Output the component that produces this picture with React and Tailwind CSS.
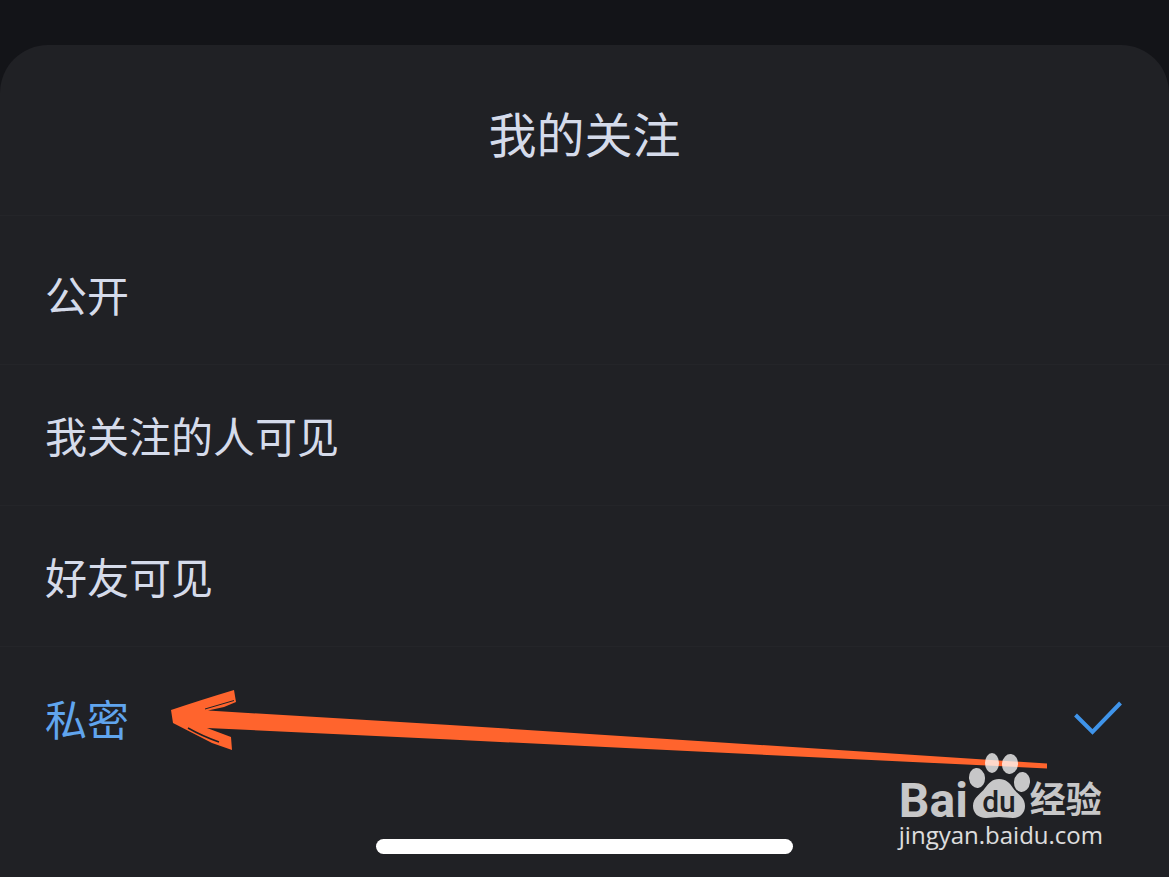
import React, { useState } from 'react';

const OPTIONS = [
  { value: 'public', label: '公开' },
  { value: 'following', label: '我关注的人可见' },
  { value: 'friends', label: '好友可见' },
  { value: 'private', label: '私密' },
];

/* ── Drawings ───────────────────────────────────────────────────────── */

const CheckIcon = () => (
  <svg width="48" height="34" viewBox="0 0 48 34" fill="none" stroke="#3f94ea" strokeWidth="4" aria-hidden="true">
    <path d="M1.500 14 18.500 31 46.500 2" />
  </svg>
);

/** Hand-drawn arrow pointing at the selected option */
const Arrow = () => (
  <svg width="878" height="80" viewBox="0 0 878 80" className="block" aria-hidden="true">
    <path
      fill="#ff642d"
      d="M1 21 Q34 10 64 1 L66 13 L54 18 L38 21.500 L280 36 L877 74.500 V79.500 L280 50.500 L37 39 L61 48 L62 61 L42 54 L3 34 Z"
    />
    <path d="M35 20 L64 11.500" stroke="#202125" strokeWidth="1" />
    <path d="M18 39 Q32 47 49 53" stroke="#202125" strokeWidth="1.500" fill="none" />
  </svg>
);

const Paw = () => (
  <svg width="62" height="69" viewBox="0 0 62 69" aria-hidden="true">
    <g fill="#fff" fillOpacity="0.75">
      <ellipse cx="9" cy="26" rx="8" ry="10" transform="rotate(-6 9 26)" />
      <ellipse cx="24" cy="11" rx="7" ry="10" />
      <ellipse cx="42" cy="12" rx="8" ry="10" transform="rotate(6 42 12)" />
      <ellipse cx="54" cy="30" rx="8" ry="10" transform="rotate(6 54 30)" />
      <path d="M31 27c7 0 11 4 14 9 4 6 12 9 12 18 0 7-5 12-12 12-5 0-9-1-14-1s-8 1-13 1C10 66 5 61 5 54c0-9 8-12 12-18 4-5 7-9 14-9Z" />
    </g>
    <text
      x="31"
      y="60"
      textAnchor="middle"
      fill="#202125"
      fontSize="30"
      fontFamily="Roboto, sans-serif"
      fontWeight="500"
    >
      du
    </text>
  </svg>
);

function Watermark() {
  return (
    <div className="flex flex-col text-white/75">
      <div className="flex items-end">
        <span className="font-[Roboto,sans-serif] text-[48px] leading-[40px] font-bold">Bai</span>
        <Paw />
        <span className="font-['Noto_Sans_CJK_SC',sans-serif] text-[36px] leading-[48px] font-bold">经验</span>
      </div>
      <span className="font-['Open_Sans',sans-serif] text-[24px] leading-[28px] font-medium text-white/85">
        jingyan.baidu.com
      </span>
    </div>
  );
}

/* ── Option row ─────────────────────────────────────────────────────── */

function OptionRow({ option, checked, onSelect }) {
  return (
    <label
      className={[
        'flex h-[141px] cursor-pointer items-center justify-between pl-[45px] pr-[47px] text-[42px] leading-[60px]',
        checked ? 'text-[#60a5ee]' : 'text-[#d5dbea]',
      ].join(' ')}
    >
      <input
        type="radio"
        name="visibility"
        value={option.value}
        checked={checked}
        onChange={() => onSelect(option.value)}
        className="sr-only"
      />
      <span>{option.label}</span>
      {checked && <CheckIcon />}
    </label>
  );
}

export default function App() {
  const [selected, setSelected] = useState('private');

  return (
    <div className="relative flex min-h-screen flex-col overflow-hidden bg-[#131418] pt-[45px] font-['Noto_Sans_CJK_SC',sans-serif] font-normal">
      <main className="relative flex flex-1 flex-col rounded-t-[48px] bg-[#202125]">
        <h1
          id="sheet-title"
          className="border-b border-[#242529] pt-[51px] pb-[47px] text-center text-[48px] leading-[72px] text-[#d5dbea]"
        >
          我的关注
        </h1>
        <div role="radiogroup" aria-labelledby="sheet-title" className="divide-y divide-[#242529] pt-2">
          {OPTIONS.map((option) => (
            <OptionRow
              key={option.value}
              option={option}
              checked={option.value === selected}
              onSelect={setSelected}
            />
          ))}
        </div>
        <div className="mx-auto mt-auto mb-[23px] h-[15px] w-[417px] rounded-full bg-white" />
      </main>
      <div className="pointer-events-none absolute bottom-[108px] left-[170px]">
        <Arrow />
      </div>
      <div className="pointer-events-none absolute right-[66px] bottom-[28px]">
        <Watermark />
      </div>
    </div>
  );
}
